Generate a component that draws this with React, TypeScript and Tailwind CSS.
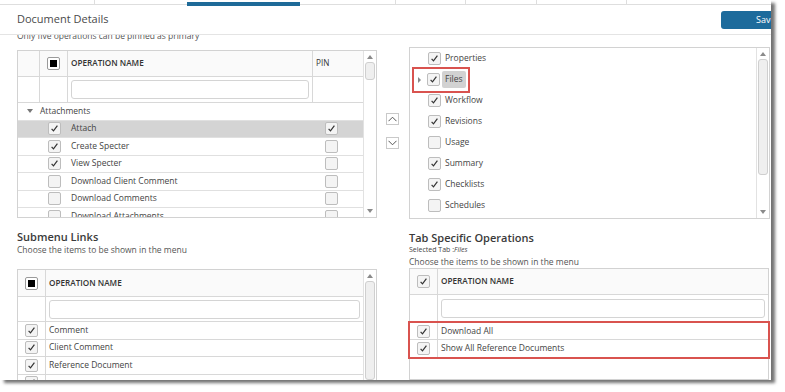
import React from 'react'

const LEFT_ROWS = [
  { name: 'Attach', on: true, pin: true, sel: true },
  { name: 'Create Specter', on: true },
  { name: 'View Specter', on: true },
  { name: 'Download Client Comment' },
  { name: 'Download Comments' },
  { name: 'Download Attachments' },
]

const TAB_ITEMS: [string, boolean][] = [
  ['Properties', true],
  ['Files', true],
  ['Workflow', true],
  ['Revisions', true],
  ['Usage', false],
  ['Summary', true],
  ['Checklists', true],
  ['Schedules', false],
  ['', false],
]

const SUBMENU = ['Comment', 'Client Comment', 'Reference Document', '']

function Check({ on }: { on?: boolean }) {
  return (
    <span className="inline-flex h-[13px] w-[13px] shrink-0 items-center justify-center rounded-[2px] border border-[#bdbdbd] bg-[#f4f4f4]">
      {on && (
        <svg width="11" height="11" viewBox="0 0 11 11">
          <path d="M2.6 5.8 L4.5 7.9 L8.4 2.6" fill="none" stroke="#333" strokeWidth="1.2" />
        </svg>
      )}
    </span>
  )
}

function HeadCheck() {
  return (
    <span className="inline-flex h-[13px] w-[13px] items-center justify-center rounded-[2px] border border-[#9a9a9a] bg-white">
      <span className="h-[7px] w-[7px] bg-black" />
    </span>
  )
}

function Scrollbar({ thumb }: { thumb: number }) {
  return (
    <div className="flex w-[13px] shrink-0 flex-col items-center border-l border-[#e2e2e2] bg-white">
      <span className="mt-[4px] h-0 w-0 border-x-[3px] border-b-[4px] border-x-transparent border-b-[#8a8a8a]" />
      <div className="mt-[3px] w-[10px] rounded-[3px] border border-[#cfcfcf] bg-[#efefef]" style={{ height: thumb }} />
      <div className="flex-1" />
      <span className="mb-[4px] h-0 w-0 border-x-[3px] border-t-[4px] border-x-transparent border-t-[#8a8a8a]" />
    </div>
  )
}

function Arrow({ down }: { down?: boolean }) {
  return (
    <span className="flex h-[12px] w-[13px] items-center justify-center border border-[#c9c9c9] bg-white">
      <svg width="9" height="6" viewBox="0 0 9 6">
        <path d={down ? 'M0.5 0.8 L4.5 4.8 L8.5 0.8' : 'M0.5 5.2 L4.5 1.2 L8.5 5.2'} fill="none" stroke="#555" strokeWidth="1" />
      </svg>
    </span>
  )
}

export default function App() {
  return (
    <div className="h-[392px] w-[785px] overflow-hidden bg-white font-['Open_Sans',sans-serif] text-[#444]">
      <div className="h-[380px] w-[771px] overflow-hidden bg-white shadow-[4px_3px_3px_rgba(0,0,0,0.55)]">
        {/* tab strip */}
        <div className="flex h-[5px] border-b border-[#dedede]">
          <div className="w-[95px] border-r border-[#dedede]" />
          <div className="w-[92px]" />
          <div className="w-[113px]">
            <div className="mt-[2px] h-[4px] bg-[#1e6a98]" />
          </div>
          <div className="w-[96px] border-r border-[#dedede]" />
          <div className="w-[70px] border-r border-[#dedede]" />
          <div className="w-[71px] border-r border-[#dedede]" />
          <div className="w-[90px] border-r border-[#dedede]" />
          <div className="flex-1" />
        </div>

        {/* header */}
        <div className="flex h-[30px] items-center justify-between border-b border-[#e4e4e4] pl-[17px]">
          <span className="text-[11px] text-[#4a4a4a]">Document Details</span>
          <button className="mr-[-12px] flex h-[18px] w-[62px] items-center rounded-[3px] bg-[#1d6b9c] pl-[35px] text-[9px] text-white">
            Save
          </button>
        </div>

        {/* body */}
        <div className="flex h-[345px] overflow-hidden pl-[17px]">
          {/* left column */}
          <div className="flex w-[360px] shrink-0 flex-col">
            <p className="-mt-[5px] h-[12px] text-[8.5px] leading-[12px] text-[#555]">Only five operations can be pinned as primary</p>

            <div className="mt-[8px] flex h-[168px] border border-[#d2d2d2]">
              <div className="flex flex-1 flex-col overflow-hidden">
                <div className="flex h-[26px] shrink-0 border-b border-[#d8d8d8] bg-[#fafafa] text-[8.2px] font-semibold text-[#333]">
                  <div className="w-[22px] border-r border-[#d8d8d8]" />
                  <div className="flex w-[28px] items-center justify-center border-r border-[#d8d8d8]"><HeadCheck /></div>
                  <div className="flex w-[245px] items-center border-r border-[#d8d8d8] pl-[3px]">OPERATION NAME</div>
                  <div className="flex flex-1 items-center pl-[3px] font-normal">PIN</div>
                </div>
                <div className="flex h-[26px] shrink-0 border-b border-[#d8d8d8]">
                  <div className="w-[22px] border-r border-[#d8d8d8]" />
                  <div className="w-[28px] border-r border-[#d8d8d8]" />
                  <div className="flex w-[245px] items-center border-r border-[#d8d8d8] px-[3px]">
                    <div className="h-[19px] w-full rounded-[3px] border border-[#d4d4d4]" />
                  </div>
                  <div className="flex-1" />
                </div>
                <div className="flex h-[17.5px] shrink-0 items-center border-b border-[#e0e0e0] text-[8.5px]">
                  <span className="ml-[9px] h-0 w-0 border-x-[3px] border-t-[4px] border-x-transparent border-t-[#777]" />
                  <span className="ml-[7px]">Attachments</span>
                </div>
                {LEFT_ROWS.map(r => (
                  <div key={r.name} className="flex h-[17.5px] shrink-0 items-center border-b border-[#e0e0e0] text-[8.5px]">
                    <div className={`flex h-full flex-1 items-center pl-[22px] ${r.sel ? 'bg-[#d4d4d4]' : ''}`}>
                      <span className="flex w-[28px] justify-center"><Check on={r.on} /></span>
                      <span className="w-[245px] pl-[3px]">{r.name}</span>
                      <span className="flex flex-1 justify-center pr-[14px]"><Check on={r.pin} /></span>
                    </div>
                  </div>
                ))}
              </div>
              <Scrollbar thumb={18} />
            </div>

            <h3 className="mt-[12px] text-[11px] font-semibold leading-[14px] text-[#3a3a3a]">Submenu Links</h3>
            <p className="text-[8.5px] leading-[12px] text-[#555]">Choose the items to be shown in the menu</p>

            <div className="mt-[13px] flex h-[120px] border border-[#d2d2d2]">
              <div className="flex flex-1 flex-col overflow-hidden">
                <div className="flex h-[27px] shrink-0 border-b border-[#d8d8d8] bg-[#fafafa] text-[8.2px] font-semibold text-[#333]">
                  <div className="flex w-[28px] items-center justify-center border-r border-[#d8d8d8]"><HeadCheck /></div>
                  <div className="flex flex-1 items-center pl-[3px]">OPERATION NAME</div>
                </div>
                <div className="flex h-[25px] shrink-0 border-b border-[#d8d8d8]">
                  <div className="w-[28px] border-r border-[#d8d8d8]" />
                  <div className="flex flex-1 items-center px-[3px]">
                    <div className="h-[19px] w-full rounded-[3px] border border-[#d4d4d4]" />
                  </div>
                </div>
                {SUBMENU.map((s, i) => (
                  <div key={i} className="flex h-[17.5px] shrink-0 border-b border-[#d8d8d8] text-[8.5px]">
                    <div className="flex w-[28px] items-center justify-center border-r border-[#d8d8d8]"><Check on /></div>
                    <div className="flex flex-1 items-center pl-[3px]">{s}</div>
                  </div>
                ))}
              </div>
              <Scrollbar thumb={120} />
            </div>
          </div>

          {/* move arrows */}
          <div className="flex w-[32px] shrink-0 flex-col items-center gap-[12px] pt-[78px] pr-[1px]">
            <Arrow />
            <Arrow down />
          </div>

          {/* right column */}
          <div className="flex w-[361px] shrink-0 flex-col">
            <div className="mt-[12px] flex h-[172px] border border-[#d2d2d2]">
              <div className="flex flex-1 flex-col overflow-hidden">
                {TAB_ITEMS.map(([name, on], i) =>
                  name === 'Files' ? (
                    <div key={i} className="flex h-[21px] shrink-0 items-center text-[8.5px]">
                      <span className="ml-[2px] flex h-[26px] items-center border-2 border-[#d9534f] pr-[2px]">
                        <span className="ml-[4px] mr-[6px] h-0 w-0 border-y-[3px] border-l-[3px] border-y-transparent border-l-[#888]" />
                        <Check on={on} />
                        <span className="ml-[2px] rounded-[2px] bg-[#d2d2d2] px-[3px] py-[4px] leading-none">Files</span>
                      </span>
                    </div>
                  ) : (
                    <div key={i} className="flex h-[21px] shrink-0 items-center gap-[4px] pl-[18px] text-[8.5px]">
                      <Check on={on} />
                      <span>{name}</span>
                    </div>
                  )
                )}
              </div>
              <Scrollbar thumb={116} />
            </div>

            <h3 className="mt-[12px] text-[11px] font-semibold leading-[14px] text-[#3a3a3a]">Tab Specific Operations</h3>
            <p className="text-[7px] leading-[10px] text-[#444]">Selected Tab :<i>Files</i></p>
            <p className="mt-[1px] text-[8.5px] leading-[12px] text-[#555]">Choose the items to be shown in the menu</p>

            <div className="flex h-[120px] w-[360px] flex-col border border-[#d2d2d2]">
              <div className="flex h-[26px] shrink-0 border-b border-[#d8d8d8] bg-[#fafafa] text-[8.2px] font-semibold text-[#333]">
                <div className="flex w-[28px] items-center justify-center border-r border-[#d8d8d8]"><Check on /></div>
                <div className="flex flex-1 items-center pl-[3px]">OPERATION NAME</div>
              </div>
              <div className="flex h-[26px] shrink-0">
                <div className="w-[28px] border-r border-[#d8d8d8]" />
                <div className="flex flex-1 items-center px-[3px]">
                  <div className="h-[19px] w-full rounded-[3px] border border-[#d4d4d4]" />
                </div>
              </div>
              <div className="-mx-[2px] border-2 border-[#d9534f]">
                {['Download All', 'Show All Reference Documents'].map(s => (
                  <div key={s} className="flex h-[17px] border-b border-[#d8d8d8] text-[8.5px] last:border-b-0">
                    <div className="flex w-[28px] items-center justify-center border-r border-[#d8d8d8]"><Check on /></div>
                    <div className="flex flex-1 items-center pl-[3px]">{s}</div>
                  </div>
                ))}
              </div>
              <div className="flex flex-1">
                <div className="w-[26px]" />
              </div>
            </div>
          </div>
        </div>
      </div>
    </div>
  )
}
